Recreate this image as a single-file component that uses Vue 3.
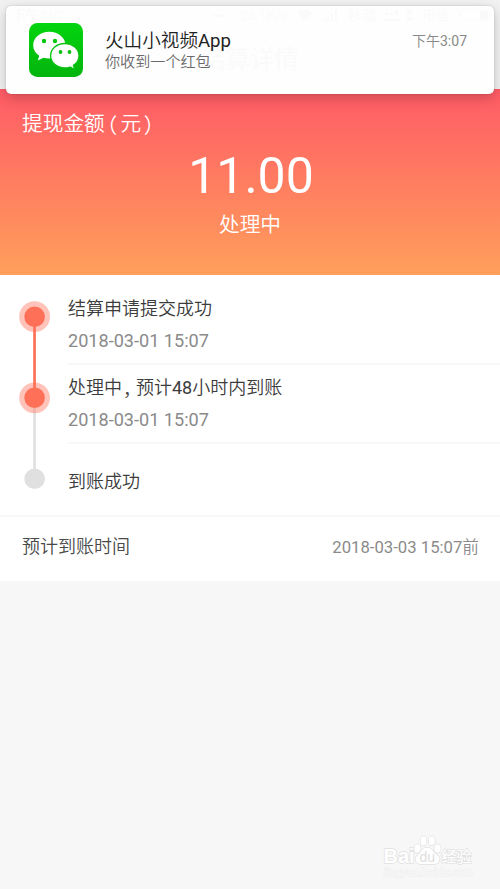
<script setup>
const steps = [
  { title: [{ text: '结算申请提交成功' }], time: '2018-03-01 15:07' },
  {
    title: [
      { text: '处理中' },
      { text: '，', kind: 'comma' },
      { text: '预计' },
      { text: '48', kind: 'latin' },
      { text: '小时内到账' },
    ],
    time: '2018-03-01 15:07',
  },
  { title: [{ text: '到账成功' }], time: '' },
]
</script>

<template>
  <div class="page">
    <div class="notice">
      <div class="ghost-status">
        <span class="g-time">下午3:07</span>
        <span class="g-dots">•••</span>
        <span>25.1K/s</span>
        <svg width="16" height="12" viewBox="0 0 16 12"><path d="M0 3.500Q8-3 16 3.500L8 12Z" /></svg>
        <svg width="17" height="12" viewBox="0 0 17 12"><path d="M1 10h2v2H1zM5 8h2v4H5zM9 5h2v7H9zM13 1h2v11h-2z" /></svg>
        <span>移动</span>
        <svg width="28" height="12" viewBox="0 0 28 12"><path d="M0 4h3v2H0zM5 3h3v3H5zM10 1h3v5h-3zM0 10h15v2H0zM22 0h5v5h-5zM22 8h5v4h-5z" /></svg>
        <span>电信</span>
        <span class="g-battery"><i></i></span>
      </div>
      <div class="ghost-title">结算详情</div>
      <svg class="app-icon" viewBox="0 0 54 54">
        <defs>
          <linearGradient id="wx" x1="0" y1="0" x2="0" y2="1">
            <stop offset="0" stop-color="#03d50e" />
            <stop offset="1" stop-color="#04b40d" />
          </linearGradient>
        </defs>
        <rect width="54" height="54" rx="8.500" fill="url(#wx)" />
        <path fill="#fff" d="M20.3 8.800C11.300 8.800 4.200 14.700 4.200 22.200c0 4.400 2.300 8 6.100 10.500l-1.500 4.900 5.600-2.900c1.900.6 3.900.8 5.900.8 9 0 16.200-5.900 16.200-13.300S29.300 8.800 20.300 8.800Z" />
        <circle cx="15" cy="18" r="2.200" fill="#05c80e" />
        <circle cx="26" cy="18" r="2.200" fill="#05c80e" />
        <path fill="#fff" stroke="#05c20e" stroke-width="1.300" d="M35.800 20.500c-7.900 0-14.200 5.400-14.200 12.200s6.300 12.200 14.200 12.200c1.900 0 3.600-.3 5.200-.9l4.700 2.500-1.300-4.200c3.500-2.200 5.600-5.700 5.600-9.600 0-6.800-6.300-12.200-14.200-12.200Z" />
        <circle cx="31.500" cy="29" r="1.900" fill="#05c20e" />
        <circle cx="40.500" cy="29" r="1.900" fill="#05c20e" />
      </svg>
      <div class="notice-text">
        <div class="notice-title">火山小视频<span class="latin">App</span></div>
        <div class="notice-sub">你收到一个红包</div>
      </div>
      <div class="notice-time">下午<span class="latin">3:07</span></div>
    </div>

    <div class="topbar"></div>

    <section class="hero">
      <div class="hero-label">提现金额<span class="open">（</span>元<span class="close">）</span></div>
      <div class="amount">11.00</div>
      <div class="state">处理中</div>
    </section>

    <section class="timeline">
      <svg class="rail" width="68" height="240" viewBox="0 0 68 240">
        <rect x="33.200" y="122" width="2.700" height="80" fill="#e0e0e0" />
        <circle cx="34.600" cy="41.700" r="15.400" fill="#ff7058" fill-opacity=".42" />
        <circle cx="34.600" cy="122.800" r="15.400" fill="#ff7058" fill-opacity=".42" />
        <rect x="33.200" y="41" width="2.700" height="80" fill="#ff7058" />
        <circle cx="34.600" cy="41.700" r="10.300" fill="#ff7058" />
        <circle cx="34.600" cy="122.800" r="10.300" fill="#ff7058" />
        <circle cx="34.600" cy="203.800" r="10.300" fill="#e0e0e0" />
      </svg>
      <div class="steps">
        <div v-for="(s, i) in steps" :key="i" class="step">
          <div class="step-title">
            <span v-for="(p, j) in s.title" :key="j" :class="p.kind">{{ p.text }}</span>
          </div>
          <div v-if="s.time" class="step-time">{{ s.time }}</div>
        </div>
      </div>
    </section>

    <section class="eta">
      <span class="eta-label">预计到账时间</span>
      <span class="eta-value"><span class="latin">2018-03-03 15:07</span>前</span>
    </section>

    <svg class="mark" width="96" height="48" viewBox="0 0 96 48">
      <g fill="#fff" stroke="#e0e0e0" stroke-width="1.400" paint-order="stroke">
        <text class="m-bai" x="3.500" y="29.500" textLength="31" lengthAdjust="spacingAndGlyphs">Bai</text>
        <ellipse cx="37.500" cy="15.500" rx="3.100" ry="4.300" />
        <ellipse cx="43.500" cy="7.800" rx="3" ry="4.500" />
        <ellipse cx="51.800" cy="7.800" rx="3" ry="4.500" />
        <ellipse cx="57.500" cy="15.500" rx="3.100" ry="4.300" />
        <path d="M47 14.500c-5 0-6 5-9 7.500-5 4-2 9 3 9h13c5 0 8-5 3-9-4-3-5-7.500-10-7.500Z" />
        <text class="m-cn" x="61.500" y="29">经验</text>
      </g>
      <text class="m-du" x="39.500" y="29">du</text>
      <text class="m-url" x="4" y="42.500" textLength="89" lengthAdjust="spacingAndGlyphs">jingyan.baidu.com</text>
    </svg>
  </div>
</template>

<style>
body {
  background: #f7f7f7;
}
</style>

<style scoped>
.page {
  position: relative;
  box-sizing: border-box;
  height: 889px;
  overflow: hidden;
  background: #f7f7f7;
  font-family: Roboto, "Noto Sans CJK SC", sans-serif;
  font-weight: 350;
}
.latin {
  font-weight: 400;
}
.notice {
  position: absolute;
  z-index: 2;
  top: 6px;
  left: 6px;
  box-sizing: border-box;
  width: 488px;
  height: 88px;
  padding: 0 27px 0 23px;
  display: flex;
  background: #fefefe;
  border-radius: 5px;
  box-shadow: 0 4px 14px rgba(0, 0, 0, 0.2), 0 0 2px rgba(0, 0, 0, 0.18);
}
.app-icon {
  width: 54px;
  height: 54px;
  margin-top: 16.500px;
}
.notice-text {
  position: relative;
  flex: 1;
  margin: 23px 0 0 22px;
}
.notice-title {
  font-size: 18.600px;
  line-height: 24px;
  color: #222;
}
.notice-sub {
  font-size: 15.100px;
  line-height: 18px;
  color: #6a6a6a;
}
.notice-time {
  margin-top: 25px;
  font-size: 14px;
  line-height: 20px;
  color: #888;
}
.ghost-status {
  position: absolute;
  top: 1px;
  left: 6px;
  right: 4px;
  display: flex;
  align-items: center;
  gap: 9.500px;
  font-size: 13.500px;
  line-height: 16px;
  color: #fafafa;
  fill: #fafafa;
}
.g-time {
  flex: 1;
}
.g-dots {
  margin-right: 6px;
}
.g-battery {
  display: flex;
  justify-content: flex-end;
  box-sizing: border-box;
  width: 31px;
  height: 12px;
  padding: 1px;
  border: 1px solid #fbfbfb;
  border-radius: 6px;
}
.g-battery i {
  width: 8px;
  background: #f9f9f9;
}
.ghost-title {
  position: absolute;
  top: 36px;
  left: 0;
  right: 0;
  text-align: center;
  font-size: 24.500px;
  line-height: 36px;
  color: #fafafa;
}
.topbar {
  height: 89px;
  background: #f2f2f2;
}
.hero {
  box-sizing: border-box;
  height: 186px;
  padding-top: 19.500px;
  background: linear-gradient(#ff5b66, #ff9f5b);
  color: #fff;
  text-align: center;
}
.hero-label {
  display: flex;
  padding-left: 22px;
  font-size: 20.700px;
  line-height: 30px;
}
.open,
.close,
.comma {
  font-family: "Noto Sans CJK SC", sans-serif;
  font-feature-settings: "halt";
}
.open {
  margin: 0 3.500px 0 2px;
}
.close {
  margin-left: 2.500px;
}
.amount {
  margin: 6.500px 0 0 2px;
  font-size: 50px;
  line-height: 62px;
  font-weight: 400;
}
.state {
  margin-top: 3px;
  font-size: 20.700px;
  line-height: 30px;
}
.timeline {
  display: flex;
  background: #fff;
  border-bottom: 2px solid #f9f9f9;
}
.rail {
  flex: none;
}
.steps {
  flex: 1;
}
.step {
  box-sizing: border-box;
  height: 79px;
  padding-top: 9px;
  border-bottom: 2px solid #f7f7f7;
}
.step:first-child {
  height: 90px;
  padding-top: 20px;
}
.step:last-child {
  height: 71px;
  padding-top: 24px;
  border: 0;
}
.step-title {
  display: flex;
  font-size: 18px;
  line-height: 28px;
  color: #3c3c3c;
}
.comma {
  margin: 0 4px 0 1px;
}
.step-time {
  margin-top: 5px;
  font-size: 18.100px;
  line-height: 26px;
  font-weight: 400;
  color: #8a8a8a;
}
.eta {
  box-sizing: border-box;
  height: 64px;
  padding: 0 21px 7px 22px;
  display: flex;
  align-items: center;
  justify-content: space-between;
  background: #fff;
}
.eta-label {
  padding-bottom: 1px;
  font-size: 18px;
  color: #4a4a4a;
}
.eta-value {
  font-size: 16.700px;
  color: #8a8a8a;
}
.mark {
  position: absolute;
  left: 380px;
  top: 833px;
}
.m-bai {
  font: 700 20px "Liberation Sans", sans-serif;
}
.m-cn {
  font: 500 15px "Noto Sans CJK SC", sans-serif;
}
.m-du {
  font: 400 14px "Liberation Sans", sans-serif;
  fill: #dedede;
}
.m-url {
  font: 400 11px "Liberation Sans", sans-serif;
  fill: #fbfbfb;
  stroke: #ececec;
  stroke-width: 1px;
  paint-order: stroke;
}
</style>
